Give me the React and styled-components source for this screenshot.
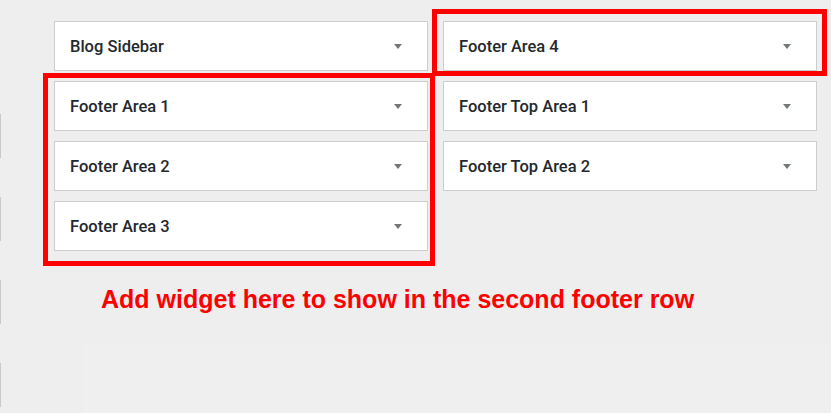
import React from 'react';
import styled, { createGlobalStyle } from 'styled-components';

const GlobalStyle = createGlobalStyle`
  html, body {
    margin: 0;
    padding: 0;
    background: #eeeeee;
    font-family: Roboto, "Noto Sans", sans-serif;
  }
`;

const Page = styled.div`
  display: flex;
  width: 831px;
  height: 413px;
  overflow: hidden;
  position: relative;
`;

const Rail = styled.div`
  display: flex;
  flex-direction: column;
  gap: 39px;
  padding-top: 114px;
  width: 1px;
`;

const RailMark = styled.span`
  display: block;
  width: 1px;
  height: 44px;
  background: #c9c9cd;
`;

const Main = styled.div`
  position: relative;
  flex: 1;
  padding: 21px 0 0 53px;
`;

const Columns = styled.div`
  display: grid;
  grid-template-columns: 374px 374px;
  column-gap: 15px;
  align-items: start;
`;

const Column = styled.div`
  display: flex;
  flex-direction: column;
  gap: 10px;
`;

const Card = styled.div`
  display: flex;
  align-items: center;
  justify-content: space-between;
  box-sizing: border-box;
  height: 50px;
  padding: 0 25px 0 15px;
  background: #ffffff;
  border: 1px solid #cccdd0;
`;

const Title = styled.h3`
  margin: 0;
  font-size: 16.5px;
  font-weight: 500;
  color: #23282d;
`;

const Arrow = styled.span`
  width: 0;
  height: 0;
  border-left: 4px solid transparent;
  border-right: 4px solid transparent;
  border-top: 5px solid #72777c;
`;

const Note = styled.p`
  margin: 34px 0 0 47px;
  font-family: "Liberation Sans", Arial, sans-serif;
  font-weight: bold;
  font-size: 25px;
  color: #ff0000;
  white-space: nowrap;
`;

const Shade = styled.div`
  position: absolute;
  left: 82px;
  top: 343px;
  right: 0;
  bottom: 0;
  background: #f0f0f0;
  opacity: 0.5;
`;

const Highlight = styled.div`
  position: absolute;
  left: ${(p) => p.$x}px;
  top: ${(p) => p.$y}px;
  width: ${(p) => p.$w}px;
  height: ${(p) => p.$h}px;
  box-sizing: border-box;
  border: 5px solid #ff0000;
  pointer-events: none;
`;

const left = ['Blog Sidebar', 'Footer Area 1', 'Footer Area 2', 'Footer Area 3'];
const right = ['Footer Area 4', 'Footer Top Area 1', 'Footer Top Area 2'];

function Widget({ title }) {
  return (
    <Card>
      <Title>{title}</Title>
      <Arrow />
    </Card>
  );
}

export default function App() {
  return (
    <Page>
      <GlobalStyle />
      <Shade />
      <Rail>
        <RailMark />
        <RailMark />
        <RailMark />
        <RailMark />
      </Rail>
      <Main>
        <Columns>
          <Column>
            {left.map((t) => <Widget key={t} title={t} />)}
          </Column>
          <Column>
            {right.map((t) => <Widget key={t} title={t} />)}
          </Column>
        </Columns>
        <Note>Add widget here to show in the second footer row</Note>
        <Highlight $x={42} $y={73} $w={392} $h={193} />
        <Highlight $x={431} $y={9} $w={395} $h={67} />
      </Main>
    </Page>
  );
}
